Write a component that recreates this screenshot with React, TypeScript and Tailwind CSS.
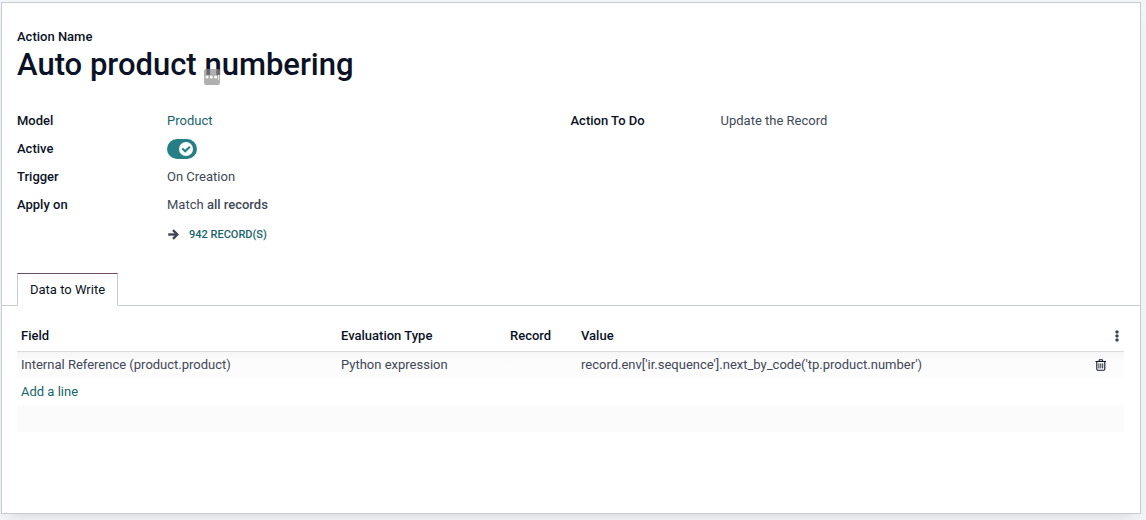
import { useState } from 'react';
import type { ReactNode } from 'react';

interface WriteLine {
  id: number;
  field: string;
  evaluationType: string;
  record: string;
  value: string;
}

const initialLines: WriteLine[] = [
  {
    id: 1,
    field: 'Internal Reference (product.product)',
    evaluationType: 'Python expression',
    record: '',
    value: "record.env['ir.sequence'].next_by_code('tp.product.number')",
  },
];

function FieldRow({ label, htmlFor, children }: { label: string; htmlFor?: string; children: ReactNode }) {
  return (
    <div className="flex h-7 items-center">
      {htmlFor ? (
        <label htmlFor={htmlFor} className="w-[150px] shrink-0 font-medium text-[#0b1226]">{label}</label>
      ) : (
        <span className="w-[150px] shrink-0 font-medium text-[#0b1226]">{label}</span>
      )}
      <div className="flex items-center">{children}</div>
    </div>
  );
}

function ArrowIcon() {
  return (
    <svg viewBox="0 0 12 12" className="h-3 w-3" fill="none" stroke="#3f4656" strokeWidth="2.4">
      <path d="M1.2 5.5H9.6" />
      <path d="M6 1.2L10.3 5.5L6 9.8" />
    </svg>
  );
}

function TrashIcon() {
  return (
    <svg viewBox="0 0 12 12" className="h-3 w-3" fill="none" stroke="#111827">
      <path d="M0.5 2.5H11" strokeWidth="1" />
      <path d="M3.8 2.4L4.4 0.8H7.2L7.8 2.4" strokeWidth="1.1" />
      <path d="M1.8 2.7V10Q1.8 11.2 2.8 11.2H8.8Q9.8 11.2 9.8 10V2.7" strokeWidth="1.1" />
      <path d="M3.9 4.4V9.4M5.8 4.4V9.4M7.7 4.4V9.4" strokeWidth="0.9" />
    </svg>
  );
}

function KebabIcon() {
  return (
    <svg viewBox="0 0 4 12" className="h-3 w-1" fill="#374151">
      <rect x="0.5" y="0.6" width="3" height="2.8" rx="0.7" />
      <rect x="0.5" y="4.6" width="3" height="2.8" rx="0.7" />
      <rect x="0.5" y="8.6" width="3" height="2.8" rx="0.7" />
    </svg>
  );
}

export default function App() {
  const [name, setName] = useState('Auto product numbering');
  const [active, setActive] = useState(true);
  const [lines, setLines] = useState(initialLines);

  const removeLine = (id: number) => setLines(lines.filter((line) => line.id !== id));
  const addLine = () =>
    setLines([...lines, { id: Date.now(), field: '', evaluationType: '', record: '', value: '' }]);

  return (
    <div className="min-h-screen bg-[#f3f4f8] pt-0.5 pr-[5px] pb-1.5 pl-px font-['Roboto','Liberation_Sans',sans-serif] text-[13px] leading-5 text-[#414757]">
      <main className="border border-[#c8cad4] bg-white pt-6 pb-[81px] shadow-[0_8px_14px_-8px_rgba(0,0,0,0.15)]">
        <div className="pr-4 pl-[15px]">
          <label htmlFor="action-name" className="block font-medium text-[#0b1226]">Action Name</label>
          <div className="relative">
            <input
              id="action-name"
              type="text"
              value={name}
              onChange={(e) => setName(e.target.value)}
              className="block h-9 w-full bg-transparent text-[31px] leading-9 font-medium text-[#0b1226] outline-none"
            />
            <span className="absolute top-[22px] left-[187px] flex h-4 w-4 items-center justify-center rounded-xs bg-[#8f8f8f]/70">
              <svg viewBox="0 0 16 16" className="h-4 w-4" fill="#fff">
                <circle cx="3" cy="8" r="1.5" />
                <circle cx="7.3" cy="8" r="1.5" />
                <circle cx="11.6" cy="8" r="1.5" />
                <rect x="14" y="6" width="0.7" height="5" />
              </svg>
            </span>
          </div>

          <div className="mt-6 grid grid-cols-2">
            <div>
              <FieldRow label="Model">
                <a href="#product" className="text-[#17646a]">Product</a>
              </FieldRow>
              <FieldRow label="Active" htmlFor="active">
                <span className="relative flex">
                  <input
                    id="active"
                    type="checkbox"
                    checked={active}
                    onChange={(e) => setActive(e.target.checked)}
                    className="h-5 w-[30px] appearance-none rounded-full bg-gray-400 checked:bg-[#267f84]"
                  />
                  <svg
                    viewBox="0 0 14 14"
                    className={`pointer-events-none absolute top-[3px] h-3.5 w-3.5 ${active ? 'left-3' : 'left-1'}`}
                  >
                    <circle cx="7" cy="7" r="7" fill="#fff" />
                    {active && <path d="M3.4 6.6L6.2 9.3L10.8 4.8" fill="none" stroke="#267f84" strokeWidth="2.1" />}
                  </svg>
                </span>
              </FieldRow>
              <FieldRow label="Trigger">On Creation</FieldRow>
              <FieldRow label="Apply on">
                <span>Match <span className="font-medium">all records</span></span>
              </FieldRow>
              <div className="mt-0.5 flex h-7 items-center pl-[150px]">
                <button type="button" className="flex items-center gap-2.5 text-[11px] font-medium text-[#17646a]">
                  <ArrowIcon />
                  942 RECORD(S)
                </button>
              </div>
            </div>
            <div>
              <FieldRow label="Action To Do">Update the Record</FieldRow>
            </div>
          </div>
        </div>

        <div role="tablist" className="mt-6 flex border-b border-[#c8cad4] px-[15px]">
          <button
            type="button"
            role="tab"
            aria-selected="true"
            className="-mb-px h-[33px] border border-t-[#714b67] border-r-[#c8cad4] border-b-white border-l-[#c8cad4] bg-white px-3 text-[#0b1226]"
          >
            Data to Write
          </button>
        </div>

        <div className="pt-4 pr-4 pl-[15px]">
          <table className="w-full table-fixed border-collapse text-left">
            <colgroup>
              <col className="w-[320px]" />
              <col className="w-[169px]" />
              <col className="w-[71px]" />
              <col />
              <col className="w-[31px]" />
            </colgroup>
            <thead>
              <tr className="h-[29px] border-b border-[#dcdde2] text-[#0b1226]">
                <th className="px-1 font-medium">Field</th>
                <th className="px-1 font-medium">Evaluation Type</th>
                <th className="px-1 font-medium">Record</th>
                <th className="px-1 font-medium">Value</th>
                <th className="pr-1">
                  <button type="button" aria-label="Optional columns" className="ml-auto flex h-4 w-1.5 items-center justify-center">
                    <KebabIcon />
                  </button>
                </th>
              </tr>
            </thead>
            <tbody>
              {lines.map((line) => (
                <tr key={line.id} className="h-[27px] bg-linear-to-b from-[#f5f5f5] to-[#fcfcfc] to-40%">
                  <td className="px-1">{line.field}</td>
                  <td className="px-1">{line.evaluationType}</td>
                  <td className="px-1">{line.record}</td>
                  <td className="px-1">{line.value}</td>
                  <td className="px-0.5">
                    <button type="button" aria-label="Delete line" onClick={() => removeLine(line.id)} className="flex h-4 w-4 items-center">
                      <TrashIcon />
                    </button>
                  </td>
                </tr>
              ))}
              <tr className="h-[27px]">
                <td colSpan={5} className="px-1">
                  <button type="button" onClick={addLine} className="block text-[#17646a]">Add a line</button>
                </td>
              </tr>
              <tr className="h-[27px] bg-[#fbfbfb]">
                <td colSpan={5} />
              </tr>
            </tbody>
          </table>
        </div>
      </main>
    </div>
  );
}
